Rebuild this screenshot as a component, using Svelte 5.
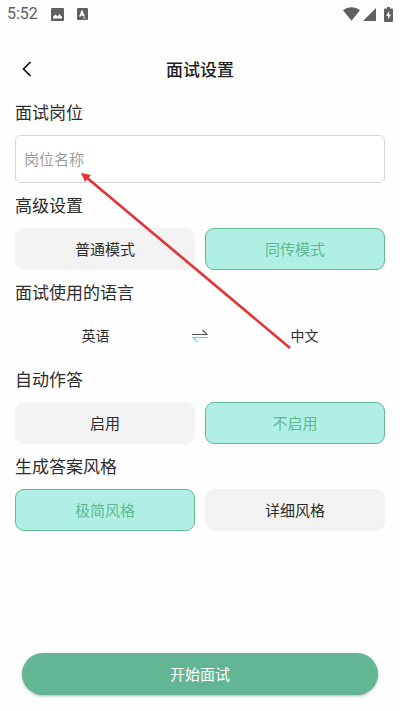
<script lang="ts">
	let position = $state('');
	let mode = $state('同传模式');
	let autoAnswer = $state('不启用');
	let answerStyle = $state('极简风格');
	let languages = $state(['英语', '中文']);

	function swapLanguages() {
		languages = [languages[1], languages[0]];
	}
</script>

{#snippet choices(options: string[], selected: string, select: (value: string) => void)}
	<div class="choices">
		{#each options as option (option)}
			<button
				type="button"
				class="choice"
				class:selected={option === selected}
				aria-pressed={option === selected}
				onclick={() => select(option)}
			>
				{option}
			</button>
		{/each}
	</div>
{/snippet}

<div class="screen">
	<div class="status-bar">
		<span class="time">5:52</span>
		<svg class="photo" width="13" height="13" viewBox="0 0 13 13" aria-hidden="true">
			<rect width="13" height="13" rx="1" fill="#606060" />
			<path d="M2 10.500v-1.500L4.500 6.500l2 2 2-2.500 2.500 3v1.500z" fill="#fff" />
		</svg>
		<svg class="letter" width="11" height="12" viewBox="0 0 11 12" aria-hidden="true">
			<rect width="11" height="12" rx="1" fill="#606060" />
			<path d="M2.800 8.500 5 3.300l2.200 5.200M3.700 6.900h2.700" fill="none" stroke="#fff" stroke-width="1.500" />
			<path d="M6 10h3" stroke="#ddd" stroke-width="0.800" />
		</svg>
		<svg class="wifi" width="17" height="14" viewBox="0 0 17 14" aria-hidden="true">
			<path d="M0 3.300C5 -0.800 12 -0.800 17 3.300L8.500 13.700z" fill="#606060" />
		</svg>
		<svg class="signal" width="13" height="13" viewBox="0 0 13 13" aria-hidden="true">
			<path d="M13 0v13H0z" fill="#606060" />
		</svg>
		<svg class="battery" width="9" height="15" viewBox="0 0 9 15" aria-hidden="true">
			<path d="M3 0h3v1.500h2q1 0 1 1V14q0 1-1 1H1q-1 0-1-1V2.500q0-1 1-1h2z" fill="#606060" />
			<path d="M5.200 4 2 8.700h2v3.500l3-4.700H5.200z" fill="#fff" />
		</svg>
	</div>

	<header>
		<button type="button" class="back" aria-label="返回">
			<svg width="10" height="16" viewBox="0 0 10 16" aria-hidden="true">
				<path d="M8.500 1 1.500 8l7 7" fill="none" stroke="#111" stroke-width="1.700" />
			</svg>
		</button>
		<h1>面试设置</h1>
	</header>

	<main>
		<h2><label for="position">面试岗位</label></h2>
		<input id="position" type="text" placeholder="岗位名称" bind:value={position} />

		<h2>高级设置</h2>
		{@render choices(['普通模式', '同传模式'], mode, (value) => (mode = value))}

		<h2>面试使用的语言</h2>
		<div class="languages">
			<button type="button" class="language">{languages[0]}</button>
			<button type="button" class="swap" aria-label="交换语言" onclick={swapLanguages}>
				<svg width="16" height="14" viewBox="0 0 16 14" fill="none" aria-hidden="true">
					<path d="M0 5.500h15L10.500 1" stroke="#555" stroke-width="1.200" />
					<path d="M16 8.500H1L5.500 13" stroke="#53dfcb" stroke-width="1.200" />
				</svg>
			</button>
			<button type="button" class="language">{languages[1]}</button>
		</div>

		<h2>自动作答</h2>
		{@render choices(['启用', '不启用'], autoAnswer, (value) => (autoAnswer = value))}

		<h2>生成答案风格</h2>
		{@render choices(['极简风格', '详细风格'], answerStyle, (value) => (answerStyle = value))}
	</main>

	<footer>
		<button type="button" class="start">开始面试</button>
	</footer>

	<svg class="pointer" width="212" height="178" viewBox="0 0 212 178" aria-hidden="true">
		<path d="M5 4 209 175" stroke="#e23434" stroke-width="2.600" />
		<path d="M0 0 10 2 4 9z" fill="#e23434" />
	</svg>
</div>

<style>
	:global(body) {
		margin: 0;
		background: #fefefe;
	}

	.screen {
		position: relative;
		display: flex;
		flex-direction: column;
		box-sizing: border-box;
		min-height: 100vh;
		padding-bottom: 16px;
		font-family: 'Noto Sans CJK SC', sans-serif;
		color: #2c2c2c;
	}

	button,
	input {
		font: inherit;
		color: inherit;
	}

	button {
		padding: 0;
		border: 0;
		background: none;
		cursor: pointer;
	}

	svg {
		display: block;
	}

	.status-bar {
		display: flex;
		align-items: center;
		height: 28px;
		padding: 0 7px;
		margin-bottom: 20px;
		color: #606060;
	}

	.time {
		font-family: Roboto, sans-serif;
		font-size: 16px;
		line-height: 28px;
	}

	.photo {
		margin-left: 13px;
	}

	.letter {
		margin-left: 13px;
	}

	.wifi {
		margin-left: auto;
	}

	.signal {
		margin-left: 3px;
	}

	.battery {
		margin-left: 8px;
	}

	header {
		display: grid;
		grid-template-columns: 24px 1fr 24px;
		align-items: center;
		height: 42px;
		padding: 0 15px;
	}

	.back {
		display: grid;
		place-items: center;
		height: 42px;
	}

	h1 {
		margin: 0;
		font-size: 17px;
		font-weight: 500;
		line-height: 42px;
		text-align: center;
		color: #1f1f1f;
	}

	main {
		padding: 0 15px;
	}

	h2 {
		margin: 0;
		padding-bottom: 2px;
		font-size: 17px;
		font-weight: 400;
		line-height: 43px;
	}

	input {
		display: block;
		box-sizing: border-box;
		width: 100%;
		height: 48px;
		padding: 0 8px 2px;
		border: 1px solid #d6d6d6;
		border-radius: 6px;
		background: #fff;
		font-size: 15px;
	}

	input::placeholder {
		color: #9c9c9c;
		opacity: 1;
	}

	.choices {
		display: grid;
		grid-template-columns: 1fr 1fr;
		gap: 10px;
	}

	.choice,
	.language,
	.start {
		padding-bottom: 2px;
	}

	.choice {
		height: 42px;
		border: 1px solid #f3f3f3;
		border-radius: 9px;
		background: #f3f3f3;
		font-size: 15px;
	}

	.choice.selected {
		border-color: #62b892;
		background: #b0f0e4;
		color: #62b892;
	}

	.languages {
		display: grid;
		grid-template-columns: 1fr 48px 1fr;
		height: 42px;
	}

	.language {
		font-size: 14px;
	}

	.swap {
		display: grid;
		place-items: center;
	}

	footer {
		margin-top: auto;
		padding: 0 22px;
	}

	.start {
		display: block;
		width: 100%;
		height: 42px;
		border-radius: 21px;
		background: #63b693;
		box-shadow: 0 1px 3px rgb(0 0 0 / 30%);
		font-size: 15px;
		color: #fff;
	}

	.pointer {
		position: absolute;
		top: 173px;
		left: 81px;
		pointer-events: none;
	}
</style>
